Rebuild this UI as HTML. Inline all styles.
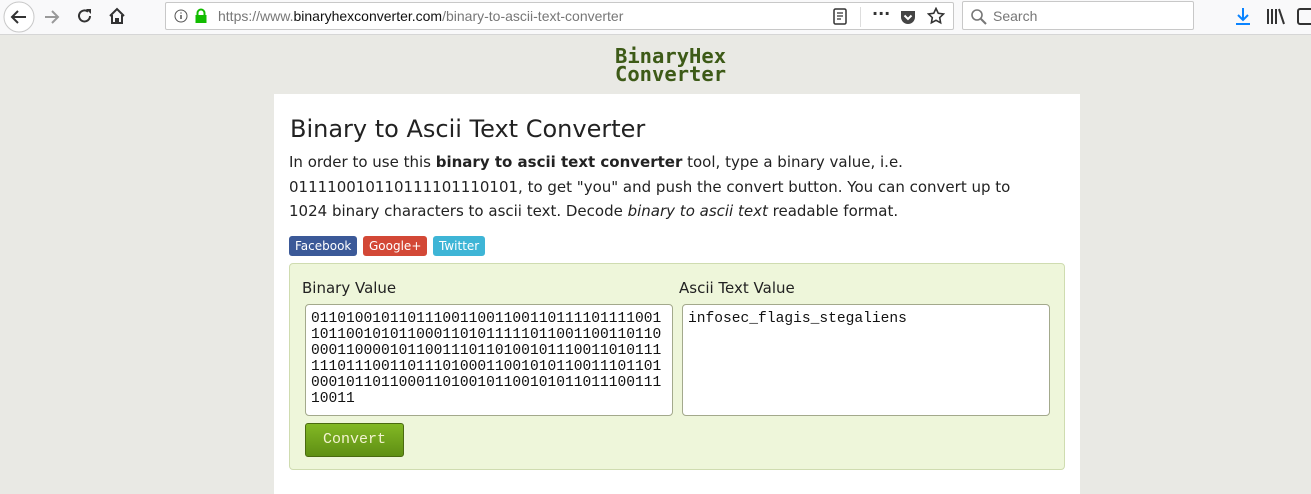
<!DOCTYPE html>
<html><head><meta charset="utf-8"><style>
*{box-sizing:border-box}
body{margin:0;width:1311px;height:472px;overflow:hidden;background:#e9e9e4;font-family:"DejaVu Sans","Liberation Sans",sans-serif;position:relative}
.tb{position:absolute;left:0;top:0;width:1311px;height:35px;background:#f9f9fa;border-bottom:1px solid #d6d6d6}
.url{position:absolute;left:165px;top:2px;width:789px;height:28px;background:#fff;border:1px solid #c8c8c8;border-radius:2px}
.srch{position:absolute;left:962px;top:1px;width:232px;height:29px;background:#fff;border:1px solid #c8c8c8;border-radius:2px}
.abs{position:absolute}
.logo{position:absolute;left:615px;top:47px;font-family:"DejaVu Sans Mono",monospace;font-weight:bold;font-size:20.5px;line-height:18px;color:#3d5a17}
.card{position:absolute;left:274px;top:94px;width:806px;height:400px;background:#fff}
h1{position:absolute;left:290px;top:115px;margin:0;font-weight:normal;font-size:24px;color:#222}
.p{position:absolute;left:289px;top:150px;width:750px;font-size:15px;line-height:24.5px;color:#222}
.btn{position:absolute;top:236px;height:20px;border-radius:3px;color:#fff;font-size:12px;line-height:20px;padding:0 6px}
.box{position:absolute;left:289px;top:263px;width:776px;height:207px;background:#eef6da;border:1px solid #cfdcb0;border-radius:4px}
.lbl{position:absolute;top:279px;font-size:15px;color:#222}
.ta{position:absolute;top:304px;height:112px;background:#fff;border:1px solid #a3a98c;border-radius:4px;font-family:"Liberation Mono",monospace;font-size:14.6px;line-height:16px;padding:6px 5px;color:#111;white-space:pre}
.cv{position:absolute;left:305px;top:423px;width:99px;height:34px;border:1px solid #4a6a10;border-radius:3px;background:linear-gradient(#82b824,#5f8f14);color:#f3f3d0;font-family:"Liberation Mono",monospace;font-size:15px;text-align:center;line-height:32px}
</style></head><body>
<div class="tb">
 <svg class="abs" style="left:2px;top:1px" width="34" height="32"><circle cx="17" cy="16" r="15" fill="#fff" stroke="#c8c8c8"/><path d="M24 16H10M16 10l-6 6 6 6" stroke="#333" stroke-width="2" fill="none"/></svg>
 <svg class="abs" style="left:43px;top:8px" width="18" height="18"><path d="M2 9h13M9 3l6 6-6 6" stroke="#999" stroke-width="2" fill="none"/></svg>
 <svg class="abs" style="left:76px;top:7px" width="18" height="18"><path d="M14 9a5.5 5.5 0 1 1-2-4.3" stroke="#333" stroke-width="2" fill="none"/><path d="M10 2h5v5z" fill="#333"/></svg>
 <svg class="abs" style="left:107px;top:6px" width="20" height="20"><path d="M3 10L10 3l7 7M5 9v8h4v-4h2v4h4V9" stroke="#333" stroke-width="2" fill="none"/></svg>
 <div class="url">
  <svg class="abs" style="left:8px;top:6px" width="14" height="14"><circle cx="7" cy="7" r="6" fill="none" stroke="#555"/><path d="M7 6v4M7 3.5v1" stroke="#555" stroke-width="1.5"/></svg>
  <svg class="abs" style="left:28px;top:5px" width="14" height="16"><path d="M3.5 7V5a3.5 3.5 0 0 1 7 0v2" stroke="#12bc00" stroke-width="2" fill="none"/><rect x="1.5" y="7" width="11" height="8" fill="#12bc00"/></svg>
  <span class="abs" style="left:52px;top:5px;font-size:14px;font-family:'Liberation Sans',sans-serif;color:#777">https://www.<span style="color:#111">binaryhexconverter.com</span>/binary-to-ascii-text-converter</span>
  <svg class="abs" style="left:666px;top:5px" width="16" height="18"><rect x="2" y="1" width="12" height="15" rx="1.5" fill="none" stroke="#333" stroke-width="1.5"/><path d="M5 5h6M5 8h6M5 11h4" stroke="#333" stroke-width="1.3"/></svg>
  <div class="abs" style="left:694px;top:4px;width:1px;height:20px;background:#ddd"></div>
  <span class="abs" style="left:706px;top:1px;font-size:16px;color:#333;font-weight:bold">···</span>
  <svg class="abs" style="left:733px;top:5px" width="18" height="18"><path d="M2 3h14v6a7 7 0 0 1-14 0z" fill="#444"/><path d="M5.5 7.5l3.5 3.5 3.5-3.5" stroke="#fff" stroke-width="2" fill="none"/></svg>
  <svg class="abs" style="left:761px;top:4px" width="18" height="18"><path d="M9 1.5l2.3 4.8 5.2.7-3.8 3.6.9 5.2L9 13.3l-4.6 2.5.9-5.2-3.8-3.6 5.2-.7z" fill="none" stroke="#333" stroke-width="1.6"/></svg>
 </div>
 <div class="srch">
  <svg class="abs" style="left:7px;top:6px" width="18" height="18"><circle cx="7" cy="7" r="5" fill="none" stroke="#777" stroke-width="1.6"/><path d="M11 11l5 5" stroke="#777" stroke-width="2"/></svg>
  <span class="abs" style="left:30px;top:6px;font-size:14px;font-family:'Liberation Sans',sans-serif;color:#777">Search</span>
 </div>
 <svg class="abs" style="left:1234px;top:7px" width="18" height="20"><path d="M9 1v12M4 8l5 5 5-5M2 17h14" stroke="#0a84ff" stroke-width="2" fill="none"/></svg>
 <svg class="abs" style="left:1266px;top:8px" width="20" height="18"><path d="M2 1v15M6 1v15M10 1v15M13 1l5 15" stroke="#333" stroke-width="2" fill="none"/></svg>
 <svg class="abs" style="left:1297px;top:8px" width="14" height="18"><rect x="1" y="1" width="16" height="15" rx="2" fill="none" stroke="#333" stroke-width="2"/></svg>
</div>
<div class="logo">BinaryHex<br>Converter</div>
<div class="card"></div>
<h1>Binary to Ascii Text Converter</h1>
<div class="p">In order to use this <b>binary to ascii text converter</b> tool, type a binary value, i.e. 011110010110111101110101, to get "you" and push the convert button. You can convert up to 1024 binary characters to ascii text. Decode <i>binary to ascii text</i> readable format.</div>
<div class="btn" style="left:289px;background:#3b5998">Facebook</div>
<div class="btn" style="left:363px;background:#d34836">Google+</div>
<div class="btn" style="left:433px;background:#3eb5d6">Twitter</div>
<div class="box"></div>
<div class="lbl" style="left:302px">Binary Value</div>
<div class="lbl" style="left:679px">Ascii Text Value</div>
<div class="ta" style="left:305px;width:368px">0110100101101110011001100110111101111001
1011001010110001101011111011001100110110
0001100001011001110110100101110011010111
1110111001101110100011001010110011101101
0001011011000110100101100101011011100111
10011</div>
<div class="ta" style="left:682px;width:368px">infosec_flagis_stegaliens</div>
<div class="cv">Convert</div>
</body></html>
